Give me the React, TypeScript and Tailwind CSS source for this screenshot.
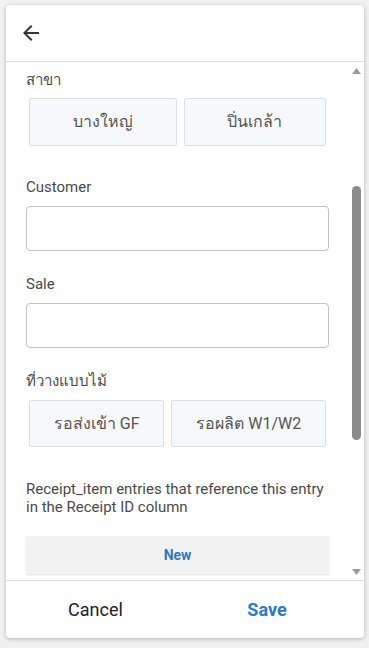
import { ReactNode } from 'react'

const font = { fontFamily: 'Roboto, "Noto Sans", "DejaVu Sans", sans-serif' }

function Label({ children, className = '' }: { children: ReactNode; className?: string }) {
  return <div className={`text-[15px] leading-[18px] text-[#4a4a4a] ${className}`}>{children}</div>
}

function Choice({ children }: { children: ReactNode }) {
  return (
    <button className="flex-auto h-full bg-[#f7f8f9] border border-[#dcdfe2] rounded-[2px] text-[16px] text-[#555] px-3">
      {children}
    </button>
  )
}

export default function App() {
  return (
    <div className="min-h-[648px] bg-[#f1f1f1] pt-[5px] pl-[6px]" style={font}>
      <div className="w-[358px] h-[633px] bg-white rounded-[4px] shadow-[0_1px_4px_rgba(0,0,0,0.25)] flex flex-col overflow-hidden">
        {/* Header */}
        <div className="h-[57px] shrink-0 flex items-center pl-[13px] border-b border-[#dcdcdc]">
          <svg width="24" height="24" viewBox="0 0 24 24" fill="#333">
            <path d="M20 11H7.83l5.59-5.59L12 4l-8 8 8 8 1.41-1.41L7.83 13H20v-2z" />
          </svg>
        </div>

        {/* Body */}
        <div className="flex-1 flex min-h-0">
          <div className="flex-1 overflow-hidden px-5 pt-[9px]">
            <Label>สาขา</Label>
            <div className="mt-[9px] h-[48px] flex gap-[7px] px-[3px]">
              <Choice>บางใหญ่</Choice>
              <Choice>ปิ่นเกล้า</Choice>
            </div>

            <Label className="mt-[32px]">Customer</Label>
            <div className="mt-[10px] h-[45px] border border-[#c4c4c4] rounded-[4px]" />

            <Label className="mt-[24px]">Sale</Label>
            <div className="mt-[10px] h-[45px] border border-[#c4c4c4] rounded-[4px]" />

            <Label className="mt-[24px]">ที่วางแบบไม้</Label>
            <div className="mt-[10px] h-[47px] flex gap-[7px] px-[3px]">
              <Choice>รอส่งเข้า GF</Choice>
              <Choice>รอผลิต W1/W2</Choice>
            </div>

            <Label className="mt-[33px]">
              Receipt_item entries that reference this entry in the Receipt ID column
            </Label>

            <button className="mt-[20px] w-full h-[38px] bg-[#f2f2f2] shadow-[0_1px_2px_rgba(0,0,0,0.12)] text-[14px] font-bold text-[#2f78c4]">
              New
            </button>
          </div>

          {/* Scrollbar */}
          <div className="w-[15px] shrink-0 flex flex-col items-center">
            <div className="h-[17px] flex items-center justify-center">
              <svg width="9" height="6" viewBox="0 0 9 6" fill="#9a9a9a">
                <path d="M4.5 0L9 6H0z" />
              </svg>
            </div>
            <div className="flex-1">
              <div className="mt-[107px] w-[9px] h-[254px] rounded-full bg-[#8c8c8c]" />
            </div>
            <div className="h-[17px] flex items-center justify-center">
              <svg width="9" height="6" viewBox="0 0 9 6" fill="#9a9a9a">
                <path d="M0 0H9L4.5 6z" />
              </svg>
            </div>
          </div>
        </div>

        {/* Footer */}
        <div className="h-[58px] shrink-0 border-t border-[#dcdcdc] flex pr-[15px]">
          <button className="w-[179px] text-[18px] text-[#222]">Cancel</button>
          <button className="flex-1 text-[18px] font-bold text-[#2f78c4]">Save</button>
        </div>
      </div>
    </div>
  )
}
